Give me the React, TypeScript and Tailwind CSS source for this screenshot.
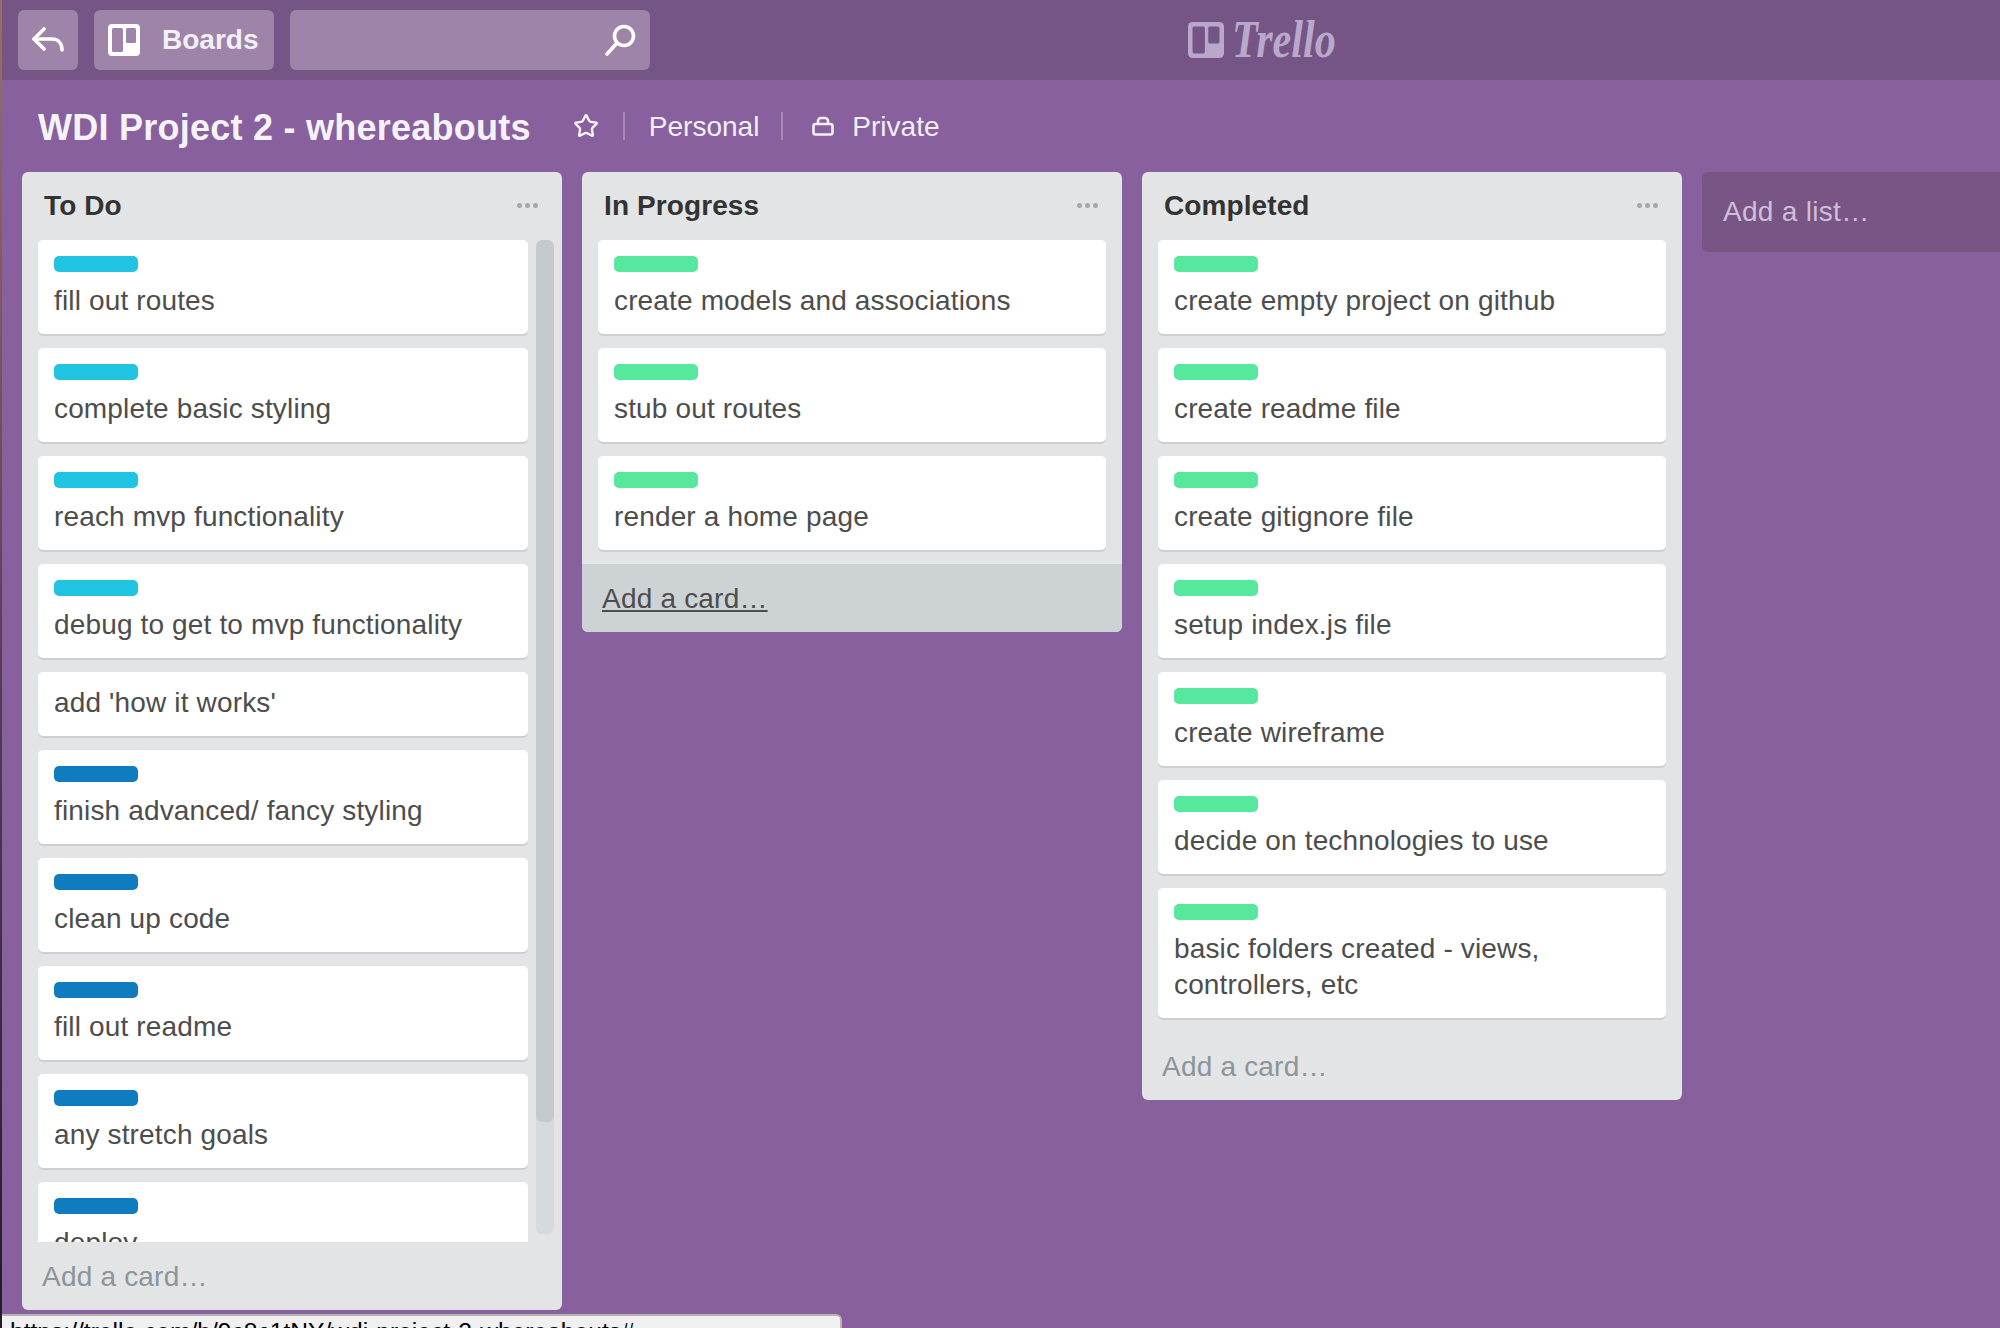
import { Star } from "lucide-react";

type Card = { text: string; label?: string };

const todo: Card[] = [
  { text: "fill out routes", label: "bg-[#21c4e0]" },
  { text: "complete basic styling", label: "bg-[#21c4e0]" },
  { text: "reach mvp functionality", label: "bg-[#21c4e0]" },
  { text: "debug to get to mvp functionality", label: "bg-[#21c4e0]" },
  { text: "add 'how it works'" },
  { text: "finish advanced/ fancy styling", label: "bg-[#0f7cc0]" },
  { text: "clean up code", label: "bg-[#0f7cc0]" },
  { text: "fill out readme", label: "bg-[#0f7cc0]" },
  { text: "any stretch goals", label: "bg-[#0f7cc0]" },
  { text: "deploy", label: "bg-[#0f7cc0]" },
];

const inProgress: Card[] = [
  { text: "create models and associations", label: "bg-[#56e89c]" },
  { text: "stub out routes", label: "bg-[#56e89c]" },
  { text: "render a home page", label: "bg-[#56e89c]" },
];

const completed: Card[] = [
  { text: "create empty project on github", label: "bg-[#56e89c]" },
  { text: "create readme file", label: "bg-[#56e89c]" },
  { text: "create gitignore file", label: "bg-[#56e89c]" },
  { text: "setup index.js file", label: "bg-[#56e89c]" },
  { text: "create wireframe", label: "bg-[#56e89c]" },
  { text: "decide on technologies to use", label: "bg-[#56e89c]" },
  { text: "basic folders created - views, controllers, etc", label: "bg-[#56e89c]" },
];

function BoardIcon({ className, hole }: { className: string; hole: string }) {
  return (
    <svg viewBox="0 0 32 32" className={className}>
      <rect width="32" height="32" rx="4" fill="currentColor" />
      <rect x="4" y="4" width="11" height="24" rx="1.5" fill={hole} />
      <rect x="18" y="4" width="10" height="15" rx="1.5" fill={hole} />
    </svg>
  );
}

function TrelloCard({ card }: { card: Card }) {
  return (
    <div className={`mb-[14px] shrink-0 rounded-[5px] bg-white px-4 shadow-[0_2px_0_#cdd0d2] ${card.label ? "pt-4 pb-[15px]" : "pt-[13px] pb-[15px]"}`}>
      {card.label && <div className={`mb-[11px] h-4 w-[84px] rounded-[5px] ${card.label}`} />}
      <div className="text-[28px] leading-[36px] tracking-[0.15px] text-[#4d4d4d]">{card.text}</div>
    </div>
  );
}

function ListHeader({ title }: { title: string }) {
  return (
    <div className="flex h-[68px] shrink-0 items-start justify-between pr-[24px] pl-[22px]">
      <h2 className="mt-[16px] text-[28px] leading-[36px] font-bold tracking-[0.1px] text-[#333]">{title}</h2>
      <div className="mt-[31px] flex gap-[3px]">
        <span className="h-[5px] w-[5px] rounded-full bg-[#a3a7aa]" />
        <span className="h-[5px] w-[5px] rounded-full bg-[#a3a7aa]" />
        <span className="h-[5px] w-[5px] rounded-full bg-[#a3a7aa]" />
      </div>
    </div>
  );
}

function AddCard({ hover }: { hover?: boolean }) {
  return (
    <div
      className={`flex h-[68px] shrink-0 items-center rounded-b-[6px] pt-[2px] pl-5 text-[28px] tracking-[0.2px] ${
        hover ? "bg-[#cdd2d4] text-[#4d4d4d] underline" : "text-[#8c9599]"
      }`}
    >
      Add a card…
    </div>
  );
}

export default function App() {
  return (
    <div className="relative flex h-[1328px] w-[2000px] overflow-hidden bg-[#89609e] font-['Liberation_Sans',Arial,sans-serif]">
      <div className="w-[2px] shrink-0 bg-gradient-to-b from-[#9b6f63] via-[#5a3d55] to-[#231c24]" />

      <div className="flex min-w-0 flex-1 flex-col">
        {/* top bar */}
        <header className="flex h-[80px] shrink-0 items-center bg-[#755586] pl-4">
          <button className="flex h-[60px] w-[60px] items-center justify-center rounded-[6px] bg-[#9e84a9]">
            <svg viewBox="0 0 32 26" className="h-[26px] w-8" fill="none" stroke="white" strokeWidth="3.6" strokeLinecap="round" strokeLinejoin="round">
              <path d="M12 2 2 12l10 10" />
              <path d="M2 12h18c6 0 10 4 10 11" />
            </svg>
          </button>
          <button className="ml-4 flex h-[60px] w-[180px] items-center rounded-[6px] bg-[#9e84a9] pl-[14px]">
            <BoardIcon className="h-8 w-8 text-white" hole="#9e84a9" />
            <span className="ml-[22px] text-[28px] font-bold text-[#f2f0f4]">Boards</span>
          </button>
          <div className="ml-4 flex h-[60px] w-[360px] items-center justify-end rounded-[6px] bg-[#9e84a9] pr-[14px]">
            <svg viewBox="0 0 32 32" className="h-[32px] w-[32px]" fill="none" stroke="white" strokeWidth="3.6" strokeLinecap="round">
              <circle cx="20" cy="12" r="9.5" />
              <path d="M13 19 3 30" />
            </svg>
          </div>
          <div className="ml-[538px] flex items-center">
            <BoardIcon className="h-9 w-9 text-[#b9a8c9]" hole="#755586" />
            <span className="ml-2 origin-left scale-x-[0.81] font-['Liberation_Serif',serif] text-[52px] leading-[50px] font-bold text-[#b9a8c9] italic">
              Trello
            </span>
          </div>
        </header>

        {/* board title row */}
        <div className="flex h-[92px] shrink-0 items-center pl-[36px] text-white">
          <h1 className="pt-[3px] text-[36px] font-bold tracking-[0.25px] text-[#f5f3f7]">WDI Project 2 - whereabouts</h1>
          <Star className="ml-[42px] h-[26px] w-[26px] text-[#f5f3f7]" strokeWidth={2.2} />
          <div className="ml-[24px] h-7 w-[2px] bg-[#a48bb2]" />
          <span className="ml-[24px] pt-[1px] text-[28px] text-[#f2eff7]">Personal</span>
          <div className="ml-[22px] h-7 w-[2px] bg-[#a48bb2]" />
          <svg viewBox="0 0 22 20" className="ml-[29px] h-5 w-[22px]" fill="none" stroke="#f2eff7" strokeWidth="2.6" strokeLinejoin="round">
            <rect x="1.5" y="8" width="19" height="10.5" rx="2" />
            <path d="M6 8V5a3 3 0 0 1 3-3h4a3 3 0 0 1 3 3v3" />
          </svg>
          <span className="ml-[18px] pt-[1px] text-[28px] text-[#f2eff7]">Private</span>
        </div>

        {/* lists */}
        <main className="flex items-start gap-5 pl-5">
          <section className="flex h-[1138px] w-[540px] shrink-0 flex-col rounded-[6px] bg-[#e2e4e6]">
            <ListHeader title="To Do" />
            <div className="flex h-[1002px] shrink-0 overflow-hidden pl-4">
              <div className="flex w-[490px] shrink-0 flex-col">
                {todo.map((card) => (
                  <TrelloCard key={card.text} card={card} />
                ))}
              </div>
              <div className="ml-2 h-[994px] w-[18px] shrink-0 overflow-hidden rounded-[6px] bg-[#d6dadc]">
                <div className="h-[882px] w-full rounded-[6px] bg-[#c4c9cc]" />
              </div>
            </div>
            <AddCard />
          </section>

          <section className="flex w-[540px] shrink-0 flex-col rounded-[6px] bg-[#e2e4e6]">
            <ListHeader title="In Progress" />
            <div className="flex flex-col px-4">
              {inProgress.map((card) => (
                <TrelloCard key={card.text} card={card} />
              ))}
            </div>
            <AddCard hover />
          </section>

          <section className="flex w-[540px] shrink-0 flex-col rounded-[6px] bg-[#e2e4e6]">
            <ListHeader title="Completed" />
            <div className="flex flex-col px-4">
              {completed.map((card) => (
                <TrelloCard key={card.text} card={card} />
              ))}
            </div>
            <AddCard />
          </section>

          <div className="flex h-20 flex-1 items-center rounded-l-[6px] bg-[#795585] pl-[21px] text-[28px] tracking-[0.3px] text-[#cdbfd8]">
            Add a list…
          </div>
        </main>
      </div>

      {/* browser status bubble */}
      <div className="absolute top-[1314px] left-[2px] h-[40px] w-[840px] rounded-tr-[6px] border-t-2 border-r-2 border-[#b5b5b5] bg-[#f0f0f0] pt-[2px] pl-2 text-[24.6px] leading-[28px] whitespace-nowrap text-black">
        https://trello.com/b/9c8c1tNY/wdi-project-2-whereabouts#
      </div>
    </div>
  );
}
